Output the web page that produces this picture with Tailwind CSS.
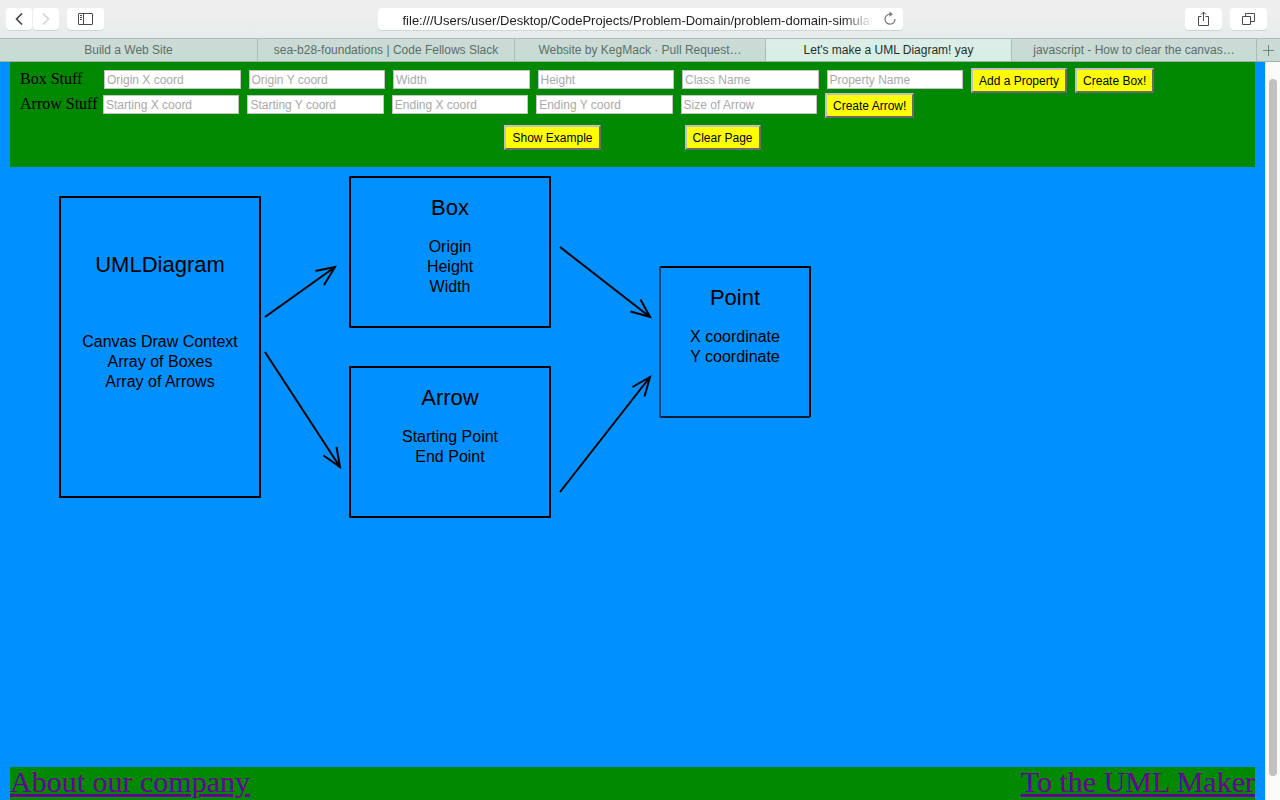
<!DOCTYPE html>
<html lang="en">
<head>
<meta charset="utf-8">
<title>Let's make a UML Diagram! yay</title>
<script src="https://cdn.jsdelivr.net/npm/@tailwindcss/browser@4"></script>
</head>
<body class="flex h-screen flex-col overflow-hidden bg-[#0090ff] font-['Liberation_Sans',Arial,sans-serif] text-black">

<header class="shrink-0">
  <div class="grid h-[38px] grid-cols-[1fr_525px_1fr] items-center bg-linear-to-b from-[#eeeeee] from-40% to-[#e5edec]">
    <div class="flex items-center pl-1.5">
      <button aria-label="Back" class="grid h-[22px] w-[26px] place-items-center rounded bg-white shadow-[0_1px_0_#ced6d6]">
        <svg width="8" height="12" viewBox="0 0 8 12" fill="none" stroke="#3f3f3f" stroke-width="1.6"><path d="M7 .5 1.5 6 7 11.500"/></svg>
      </button>
      <button aria-label="Forward" class="ml-px grid h-[22px] w-[26px] place-items-center rounded bg-white shadow-[0_1px_0_#ced6d6]">
        <svg width="8" height="12" viewBox="0 0 8 12" fill="none" stroke="#d4d4d4" stroke-width="1.6"><path d="M1 .5 6.500 6 1 11.500"/></svg>
      </button>
      <button aria-label="Show sidebar" class="ml-2 grid h-[22px] w-[37px] place-items-center rounded bg-white shadow-[0_1px_0_#ced6d6]">
        <svg width="15" height="12" viewBox="0 0 15 12" fill="none" stroke="#4a4a4a"><rect x=".5" y=".5" width="14" height="11" rx=".5"/><path d="M5.500 .5v11M2 2.500h2M2 4.500h2M2 6.500h2"/></svg>
      </button>
    </div>
    <div class="flex h-[22px] items-center rounded bg-white pr-1.5 pl-[25px] shadow-[0_1px_0_#ced6d6]">
      <input aria-label="Address" type="text" value="file:///Users/user/Desktop/CodeProjects/Problem-Domain/problem-domain-simulator/index.html" class="h-[22px] min-w-0 flex-1 bg-transparent mask-r-from-[440px] mask-r-to-100% pt-0.5 text-[13px] leading-5 text-[#222] outline-none">
      <button aria-label="Reload" class="mb-0.5 ml-2.5">
        <svg class="block" width="14" height="14" viewBox="0 0 14 14" fill="none" stroke="#777" stroke-width="1.200"><path d="M8.500 3.200H7A5 5 0 1 0 12 8"/><path d="m6.500 .6 3.300 2.600L6.500 5.800" fill="#777" stroke="none"/></svg>
      </button>
    </div>
    <div class="flex items-center justify-end gap-2 pr-[13px]">
      <button aria-label="Share" class="grid h-[22px] w-[37px] place-items-center rounded bg-white pb-px shadow-[0_1px_0_#ced6d6]">
        <svg width="11" height="15" viewBox="0 0 11 15" fill="none" stroke="#4a4a4a"><path d="M3.500 5.500h-3v9h10v-9h-3M5.500 10V1M3 3.500 5.500 1 8 3.500"/></svg>
      </button>
      <button aria-label="Show all tabs" class="grid h-[22px] w-[37px] place-items-center rounded bg-white shadow-[0_1px_0_#ced6d6]">
        <svg width="13" height="12" viewBox="0 0 13 12" fill="none" stroke="#4a4a4a"><path d="M.5 3.500h8v8h-8zM3.500 3.500v-3h9v8h-4"/></svg>
      </button>
    </div>
  </div>
  <nav aria-label="Tabs" class="grid h-6 grid-cols-[258fr_257fr_251fr_246fr_245fr_23px] border-y border-t-[#b1bdba] border-b-[#9eb0aa] bg-linear-to-b from-[#ccdad6] to-[#c5dcd3] text-xs text-[#5d6e69]">
    <button class="truncate border-r border-[#aebcb8] px-5">Build a Web Site</button>
    <button class="truncate border-r border-[#aebcb8] px-1">sea-b28-foundations | Code Fellows Slack</button>
    <button class="truncate border-r border-[#aebcb8] px-1">Website by KegMack · Pull Request…</button>
    <button class="truncate border-r border-[#aebcb8] bg-linear-to-b from-[#dcede8] to-[#d6eee4] px-1 text-[#22302c]">Let's make a UML Diagram! yay</button>
    <button class="truncate border-r border-[#aebcb8] px-1">javascript - How to clear the canvas…</button>
    <button aria-label="New tab" class="grid place-items-center"><svg width="11" height="11" viewBox="0 0 11 11" stroke="#75847f"><path d="M5.500 0v11M0 5.500h11"/></svg></button>
  </nav>
</header>

<div class="flex min-h-0 flex-1">
  <div class="flex min-w-0 flex-1 flex-col px-2.5">
    <section class="h-[105px] shrink-0 bg-[#008800] px-2.5 pt-1.5">
      <form class="flex h-[25px] items-start">
        <span class="w-[84px] shrink-0 font-['Liberation_Serif',serif] text-base leading-[22px]">Box Stuff</span>
        <div class="mt-0.5 mr-2 grid w-[859px] grid-cols-6 gap-2 text-xs">
          <input aria-label="Origin X coord" placeholder="Origin X coord" class="h-[19px] w-full min-w-0 border border-[#c3c3c3] bg-white px-0.5 placeholder:text-[#a9a9a9]">
          <input aria-label="Origin Y coord" placeholder="Origin Y coord" class="h-[19px] w-full min-w-0 border border-[#c3c3c3] bg-white px-0.5 placeholder:text-[#a9a9a9]">
          <input aria-label="Width" placeholder="Width" class="h-[19px] w-full min-w-0 border border-[#c3c3c3] bg-white px-0.5 placeholder:text-[#a9a9a9]">
          <input aria-label="Height" placeholder="Height" class="h-[19px] w-full min-w-0 border border-[#c3c3c3] bg-white px-0.5 placeholder:text-[#a9a9a9]">
          <input aria-label="Class Name" placeholder="Class Name" class="h-[19px] w-full min-w-0 border border-[#c3c3c3] bg-white px-0.5 placeholder:text-[#a9a9a9]">
          <input aria-label="Property Name" placeholder="Property Name" class="h-[19px] w-full min-w-0 border border-[#c3c3c3] bg-white px-0.5 placeholder:text-[#a9a9a9]">
        </div>
        <button type="button" class="mr-2 h-[25px] shrink-0 border-2 border-t-[#c0c0c0] border-r-[#6b6b6b] border-b-[#6b6b6b] border-l-[#c0c0c0] bg-[#ffff00] px-1.5 text-xs">Add a Property</button>
        <button type="button" class="h-[25px] shrink-0 border-2 border-t-[#c0c0c0] border-r-[#6b6b6b] border-b-[#6b6b6b] border-l-[#c0c0c0] bg-[#ffff00] px-1.5 text-xs">Create Box!</button>
      </form>
      <form class="flex h-[25px] items-start">
        <span class="w-[83px] shrink-0 font-['Liberation_Serif',serif] text-base leading-[22px]">Arrow Stuff</span>
        <div class="mt-0.5 mr-2 grid w-[714px] grid-cols-5 gap-2 text-xs">
          <input aria-label="Starting X coord" placeholder="Starting X coord" class="h-[19px] w-full min-w-0 border border-[#c3c3c3] bg-white px-0.5 placeholder:text-[#a9a9a9]">
          <input aria-label="Starting Y coord" placeholder="Starting Y coord" class="h-[19px] w-full min-w-0 border border-[#c3c3c3] bg-white px-0.5 placeholder:text-[#a9a9a9]">
          <input aria-label="Ending X coord" placeholder="Ending X coord" class="h-[19px] w-full min-w-0 border border-[#c3c3c3] bg-white px-0.5 placeholder:text-[#a9a9a9]">
          <input aria-label="Ending Y coord" placeholder="Ending Y coord" class="h-[19px] w-full min-w-0 border border-[#c3c3c3] bg-white px-0.5 placeholder:text-[#a9a9a9]">
          <input aria-label="Size of Arrow" placeholder="Size of Arrow" class="h-[19px] w-full min-w-0 border border-[#c3c3c3] bg-white px-0.5 placeholder:text-[#a9a9a9]">
        </div>
        <button type="button" class="h-[25px] shrink-0 border-2 border-t-[#c0c0c0] border-r-[#6b6b6b] border-b-[#6b6b6b] border-l-[#c0c0c0] bg-[#ffff00] px-1.5 text-xs">Create Arrow!</button>
      </form>
      <div class="mt-[7px] flex justify-center gap-[84px]">
        <button type="button" class="h-[25px] border-2 border-t-[#c0c0c0] border-r-[#6b6b6b] border-b-[#6b6b6b] border-l-[#c0c0c0] bg-[#ffff00] px-1.5 text-xs">Show Example</button>
        <button type="button" class="h-[25px] border-2 border-t-[#c0c0c0] border-r-[#6b6b6b] border-b-[#6b6b6b] border-l-[#c0c0c0] bg-[#ffff00] px-1.5 text-xs">Clear Page</button>
      </div>
    </section>

    <main class="min-h-0 flex-1 overflow-hidden">
      <svg class="block text-base" width="900" height="500" viewBox="0 0 900 500" role="img" aria-label="UML diagram">
        <g fill="none" stroke="#000" stroke-width="2" stroke-linejoin="round">
          <rect x="50" y="30" width="200" height="300"/>
          <rect x="340" y="10" width="200" height="150"/>
          <rect x="340" y="200" width="200" height="150"/>
          <path d="M650 100h150v150"/>
          <path d="M650 250h150" stroke="#001f38"/>
          <path d="M650 100v150" stroke="#0a4478"/>
        </g>
        <g fill="none" stroke="#000" stroke-width="2">
          <path d="M255 150 325 100M305.500 104 325 100 314 118"/>
          <path d="M255 185 330 300M326.500 280 330 300 313.500 288.500"/>
          <path d="M550 80 640 150M630.500 132.500 640 150 620.500 144.500"/>
          <path d="M550 325 640 210M622.500 220 640 210 634.500 229.500"/>
        </g>
        <g text-anchor="middle">
          <g class="text-[22px]">
            <text x="150" y="105">UMLDiagram</text>
            <text x="440" y="48">Box</text>
            <text x="440" y="238">Arrow</text>
            <text x="725" y="138">Point</text>
          </g>
          <text x="150" y="180">Canvas Draw Context</text>
          <text x="150" y="200">Array of Boxes</text>
          <text x="150" y="220">Array of Arrows</text>
          <text x="440" y="85">Origin</text>
          <text x="440" y="105">Height</text>
          <text x="440" y="125">Width</text>
          <text x="440" y="275">Starting Point</text>
          <text x="440" y="295">End Point</text>
          <text x="725" y="175">X coordinate</text>
          <text x="725" y="195">Y coordinate</text>
        </g>
      </svg>
    </main>

    <footer class="flex h-[33px] shrink-0 justify-between bg-[#008800] font-['Liberation_Serif',serif] text-[30px] leading-[30px] text-[#660099]">
      <a href="#about" class="underline">About our company</a>
      <a href="#maker" class="underline">To the UML Maker</a>
    </footer>
  </div>
  <div class="w-[15px] shrink-0 border-l border-[#e8e8e8] bg-[#fafafa] px-[3px] pt-[17px] pb-6" aria-hidden="true">
    <div class="h-full w-2 rounded-full bg-[#c1c1c1]"></div>
  </div>
</div>
</body>
</html>
